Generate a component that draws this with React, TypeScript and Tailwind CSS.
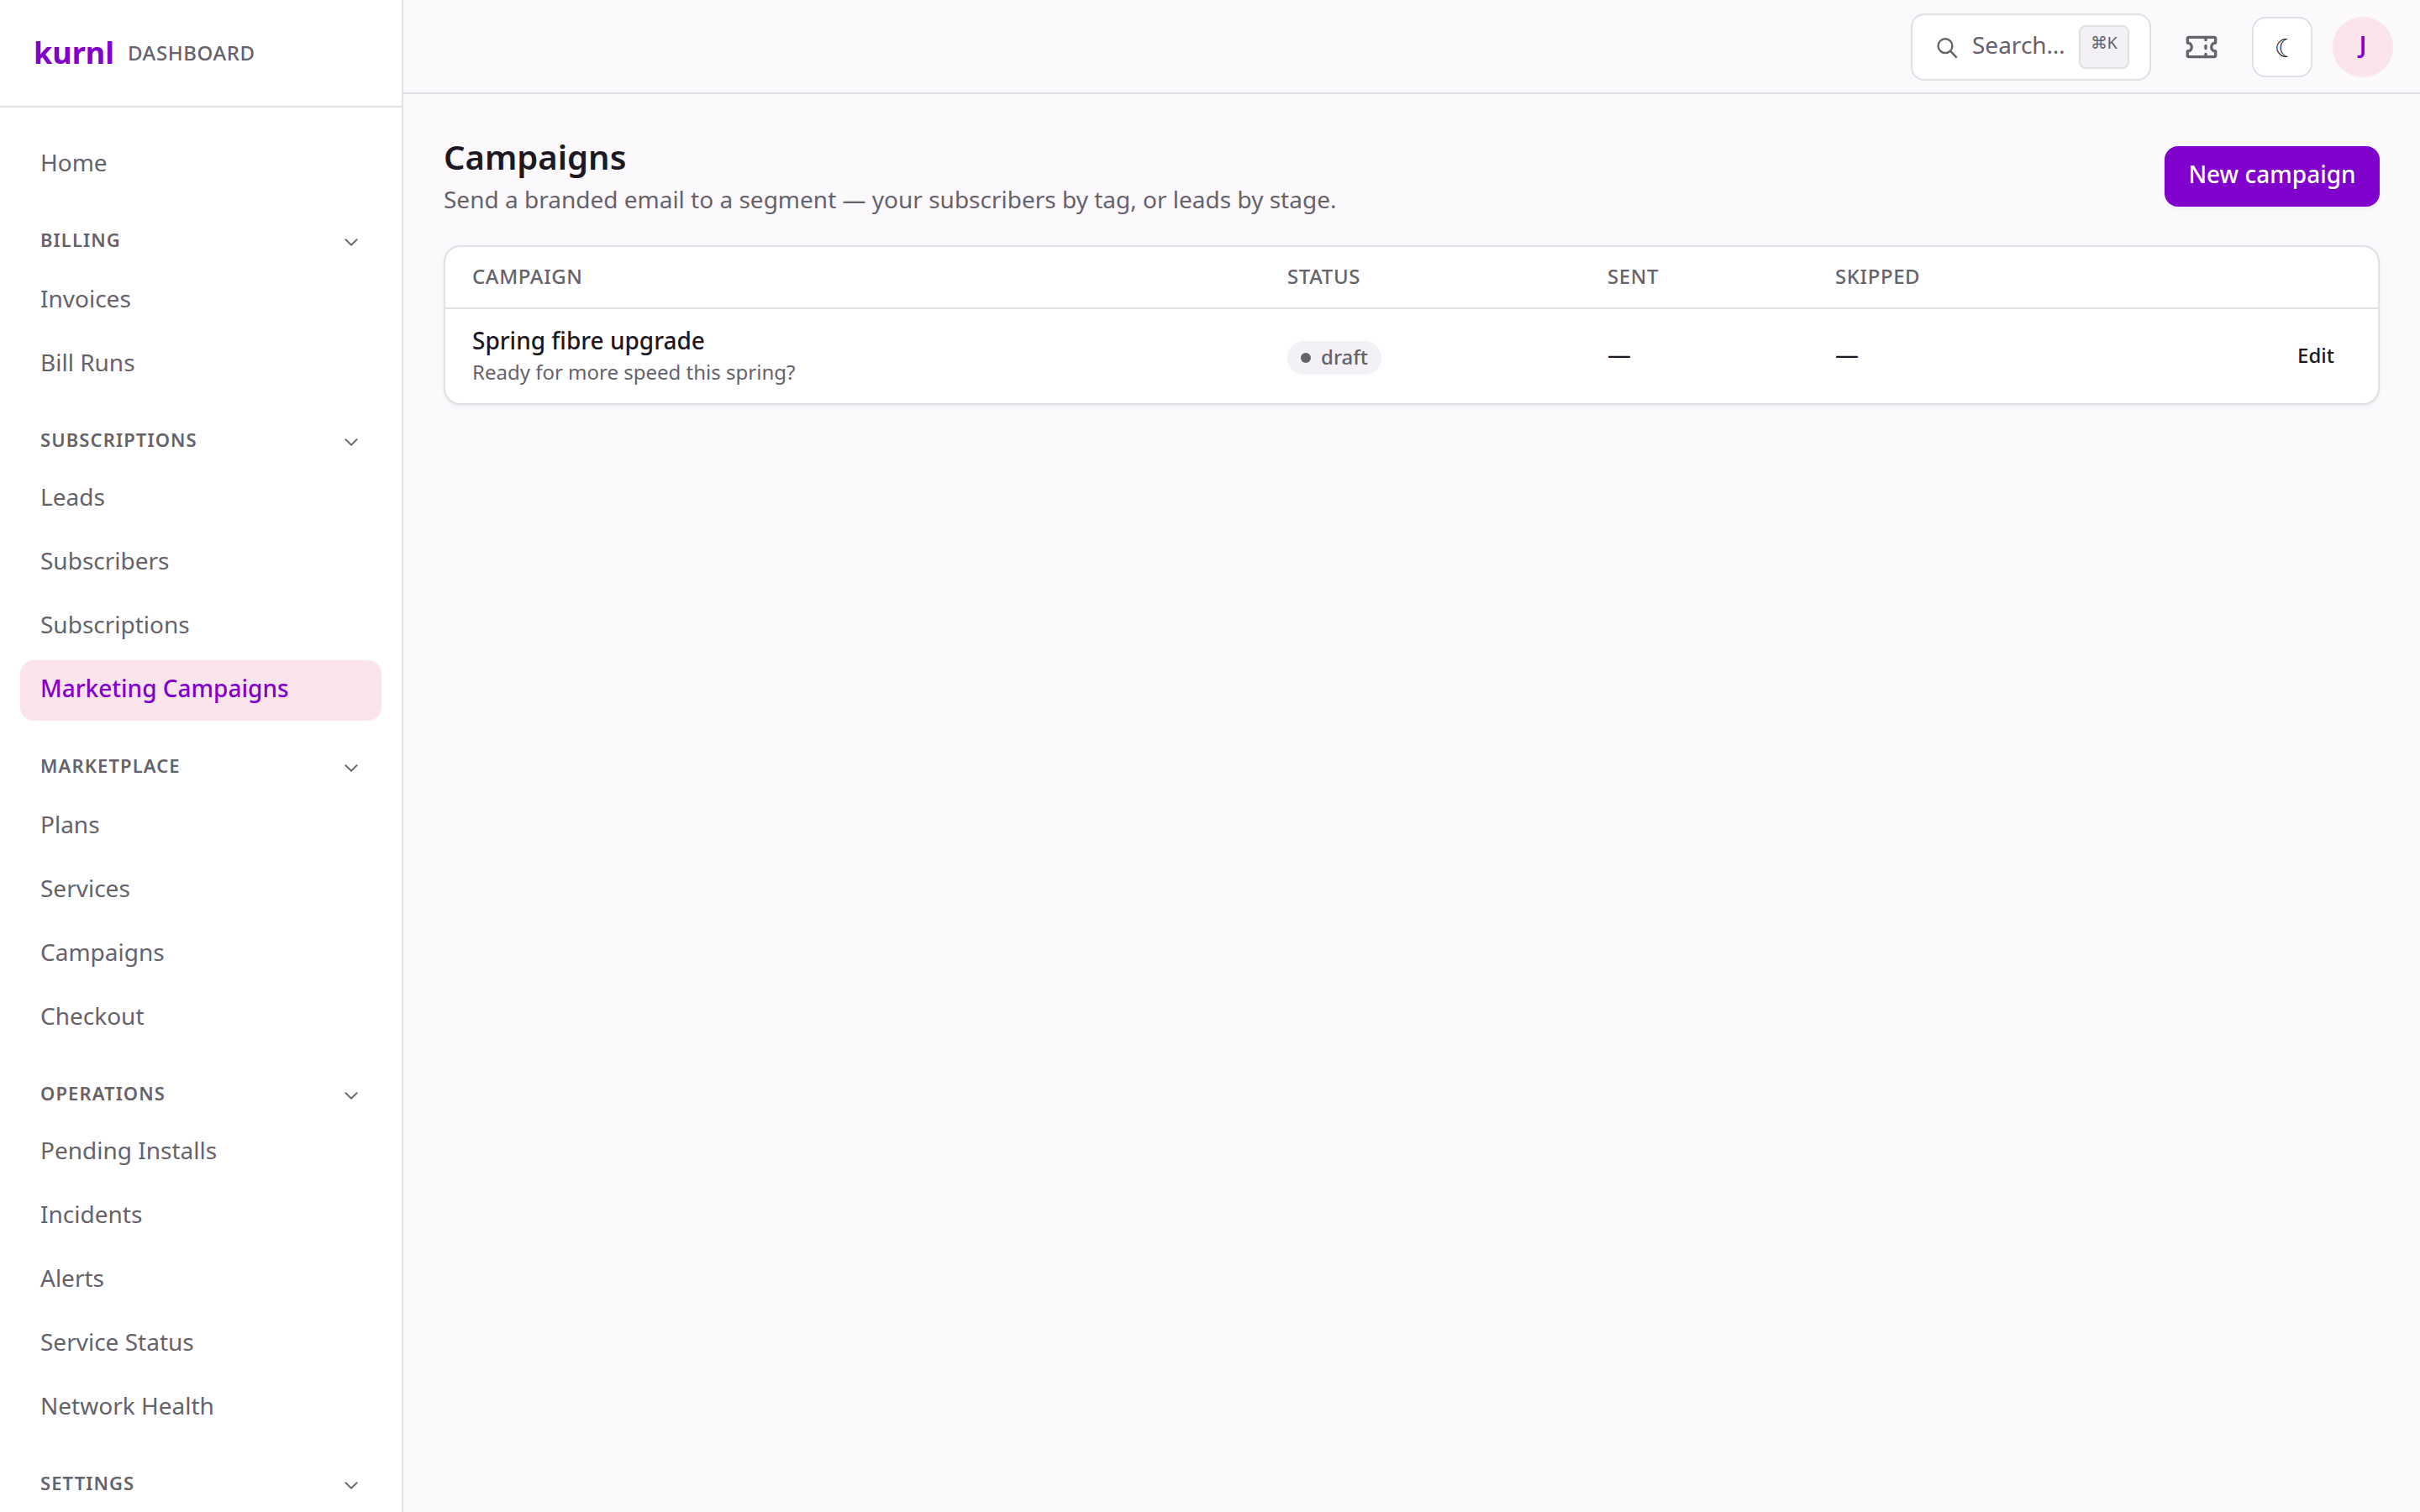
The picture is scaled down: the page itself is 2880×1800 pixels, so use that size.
import React from "react";

type Group = {
  title: string;
  items: string[];
  headingClass: string;
};

const groups: Group[] = [
  { title: "Billing", items: ["Invoices", "Bill Runs"], headingClass: "h-[90px]" },
  {
    title: "Subscriptions",
    items: ["Leads", "Subscribers", "Subscriptions", "Marketing Campaigns"],
    headingClass: "h-[88px]",
  },
  { title: "Marketplace", items: ["Plans", "Services", "Campaigns", "Checkout"], headingClass: "h-[90px]" },
  {
    title: "Operations",
    items: ["Pending Installs", "Incidents", "Alerts", "Service Status", "Network Health"],
    headingClass: "h-[88px]",
  },
  { title: "Settings", items: [], headingClass: "h-[90px]" },
];

const campaigns = [
  {
    name: "Spring fibre upgrade",
    subject: "Ready for more speed this spring?",
    status: "draft",
    sent: "—",
    skipped: "—",
  },
];

const NavItem = ({ label, active }: { label: string; active?: boolean }) => (
  <a
    className={
      active
        ? "flex h-[72px] items-center rounded-2xl bg-[#fce4ec] px-6 pb-1.5 text-[28px] leading-10 font-medium text-[#8000cc]"
        : "flex h-[72px] items-center rounded-2xl px-6 pb-1.5 text-[28px] leading-10 text-[#66626a]"
    }
  >
    {label}
  </a>
);

const Sidebar = ({ current }: { current: string }) => (
  <aside className="flex w-[480px] shrink-0 flex-col overflow-hidden border-r-2 border-[#e1dfe6] bg-white">
    <div className="flex h-32 shrink-0 items-center gap-4 border-b-2 border-[#e1dfe6] px-10">
      <span className="pb-px text-[36px] leading-[53px] font-bold text-[#8000cc]">kurnl</span>
      <span className="text-[24px] leading-9 font-medium tracking-wide text-[#66626a]">DASHBOARD</span>
    </div>
    <nav className="flex flex-col px-6 pt-8">
      <NavItem label="Home" />
      {groups.map((group) => (
        <section key={group.title}>
          <button
            type="button"
            className={`flex w-full items-start justify-between px-6 pt-[37px] ${group.headingClass}`}
          >
            <span className="text-[22px] leading-8 font-semibold tracking-wider text-[#66626a] uppercase">
              {group.title}
            </span>
            <svg className="mt-[10px] mr-1 h-4 w-4" viewBox="0 0 16 16" fill="none">
              <path d="M0.8 5.6 8 12.6 15.2 5.6" stroke="#66626a" strokeWidth="2" />
            </svg>
          </button>
          <div className="flex flex-col gap-1">
            {group.items.map((item) => (
              <NavItem key={item} label={item} active={item === current} />
            ))}
          </div>
        </section>
      ))}
    </nav>
  </aside>
);

const Topbar = () => (
  <header className="flex h-28 shrink-0 items-center justify-end border-b-2 border-[#e1dfe6] pt-0.5 pr-8">
    <button
      type="button"
      className="flex h-20 w-[286px] items-center rounded-2xl border-2 border-[#e1dfe6] bg-white pl-7"
    >
      <svg className="h-7 w-7 shrink-0" viewBox="0 0 28 28" fill="none" stroke="#66626a" strokeWidth="2.4">
        <circle cx="11" cy="12.7" r="8.4" />
        <path d="M17 18.7 24.7 26.6" />
      </svg>
      <span className="ml-[15px] pb-1.5 text-[28px] leading-10 text-[#66626a]">Search…</span>
      <kbd className="ml-4 flex h-[52px] w-[60px] justify-center rounded-lg border-2 border-[#e1dfe6] bg-[#f3f1f6] pt-1 font-['Noto_Sans'] text-[20px] leading-[29px] text-[#66626a]">
        ⌘K
      </kbd>
    </button>
    <button type="button" className="ml-6 flex h-[72px] w-[72px] items-center justify-center">
      <svg
        className="h-10 w-10"
        viewBox="0 0 24 24"
        fill="none"
        stroke="#66626a"
        strokeWidth="2"
        strokeLinecap="round"
        strokeLinejoin="round"
      >
        <path d="M2 9V6a1 1 0 0 1 1-1h18a1 1 0 0 1 1 1v3a3 3 0 0 0 0 6v3a1 1 0 0 1-1 1H3a1 1 0 0 1-1-1v-3a3 3 0 0 0 0-6Z" />
        <path d="M15 5v2" />
        <path d="M15 11v2" />
        <path d="M15 17v2" />
      </svg>
    </button>
    <button
      type="button"
      className="ml-6 flex h-[72px] w-[72px] items-center justify-center rounded-2xl border-2 border-[#e1dfe6] bg-white pt-1 font-['DejaVu_Sans_Mono',monospace] text-[30px] leading-10 text-[#1c1922]"
    >
      ☾
    </button>
    <div className="ml-6 flex h-[72px] w-[72px] items-center justify-center rounded-full bg-[#fce4ec] pb-1.5 text-[28px] leading-10 font-semibold text-[#8000cc]">
      J
    </div>
  </header>
);

const CampaignTable = () => (
  <div className="mt-8 overflow-hidden rounded-[20px] border-2 border-[#e1dfe6] bg-white shadow-[0_2px_4px_rgba(28,25,34,0.06)]">
    <div className="grid h-[74px] grid-cols-[970px_381px_271px_1fr] border-b-2 border-[#e1dfe6] pt-[17px] pl-8 text-[24px] leading-[35px] font-medium tracking-wide text-[#66626a] uppercase">
      <span>Campaign</span>
      <span>Status</span>
      <span>Sent</span>
      <span>Skipped</span>
    </div>
    {campaigns.map((c) => (
      <div
        key={c.name}
        className="grid h-28 grid-cols-[970px_381px_271px_1fr] items-center px-8 text-[28px] leading-10 text-[#1c1922]"
      >
        <div className="flex flex-col pb-[3px]">
          <span className="font-medium">{c.name}</span>
          <span className="text-[24px] leading-[35px] text-[#66626a]">{c.subject}</span>
        </div>
        <div className="flex">
          <span className="mt-1 flex h-10 w-[112px] items-center gap-3 rounded-full bg-[#f3f1f6] pl-4 text-[24px] font-medium text-[#66626a]">
            <span className="h-3 w-3 rounded-full bg-[#66626a]" />
            <span className="pb-[3px] leading-[35px]">{c.status}</span>
          </span>
        </div>
        <span className="pb-1.5">{c.sent}</span>
        <div className="flex items-center justify-between">
          <span className="pb-1.5">{c.skipped}</span>
          <button type="button" className="px-5 pb-[3px] text-[24px] leading-[35px] font-medium">
            Edit
          </button>
        </div>
      </div>
    ))}
  </div>
);

export default function App() {
  return (
    <div className="flex h-[1800px] w-[2880px] overflow-hidden bg-[#fbf9fc] font-['Noto_Sans',sans-serif]">
      <Sidebar current="Marketing Campaigns" />
      <div className="flex min-w-0 flex-1 flex-col">
        <Topbar />
        <main className="px-12 pt-12">
          <div className="flex h-[100px] items-start justify-between">
            <div>
              <h1 className="text-[40px] leading-[53px] font-semibold text-[#1c1922]">Campaigns</h1>
              <p className="mt-[3px] text-[28px] leading-[42px] text-[#66626a]">
                Send a branded email to a segment — your subscribers by tag, or leads by stage.
              </p>
            </div>
            <button
              type="button"
              className="mt-[14px] h-[72px] w-64 rounded-2xl bg-[#8000cc] pb-1.5 text-[28px] leading-10 font-medium text-white shadow-[0_2px_4px_rgba(28,25,34,0.06)]"
            >
              New campaign
            </button>
          </div>
          <CampaignTable />
        </main>
      </div>
    </div>
  );
}
